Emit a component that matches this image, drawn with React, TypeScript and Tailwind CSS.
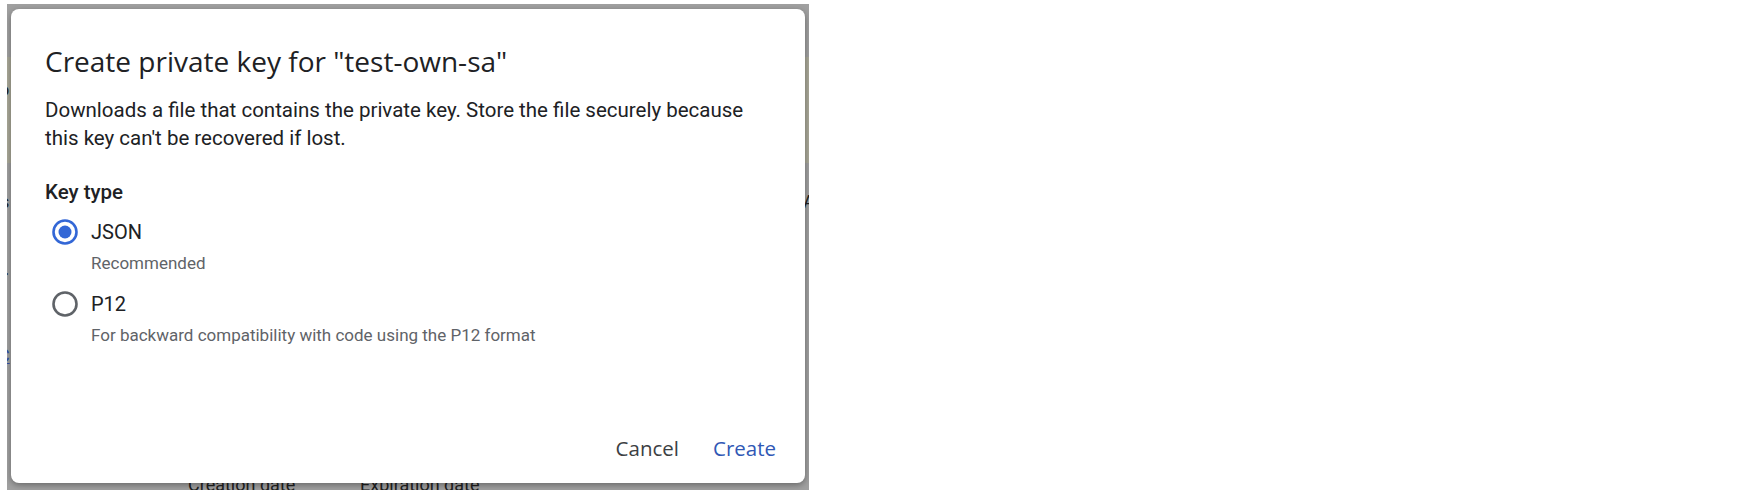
import React from "react";

function Radio({ checked }: { checked: boolean }) {
  return (
    <svg width="26" height="26" viewBox="0 0 26 26" className="shrink-0">
      <circle
        cx="13"
        cy="13"
        r="11.5"
        fill="none"
        stroke={checked ? "#3367d6" : "#5f6368"}
        strokeWidth="2.6"
      />
      {checked && <circle cx="13" cy="13" r="6.5" fill="#3367d6" />}
    </svg>
  );
}

function KeyOption({
  label,
  hint,
  checked,
  className,
}: {
  label: string;
  hint: string;
  checked: boolean;
  className?: string;
}) {
  return (
    <div className={className}>
      <div className="flex items-center gap-[13px] pl-[7px]">
        <Radio checked={checked} />
        <span className="text-[20px] leading-[28px] text-[#202124]">{label}</span>
      </div>
      <div className="mt-[7px] pl-[46px] text-[17px] leading-[20px] text-[#5f6368]">{hint}</div>
    </div>
  );
}

export default function App() {
  return (
    <div className="h-[494px] w-[1758px] bg-white pl-[7px] pt-[4px] font-['Roboto',sans-serif]">
      <div className="relative h-[486px] w-[802px] overflow-hidden bg-[#a0a0a0]">
        {/* page behind the dialog */}
        <div className="absolute inset-0 text-[18px] text-[#202020]">
          <div className="absolute left-0 right-0 top-[53px] h-[106px] bg-[#a9a898]" />
          <span className="absolute left-[-8px] top-[72px]">o</span>
          <span className="absolute left-[-7px] top-[184px]">s</span>
          <span className="absolute left-[-8px] top-[256px]">&gt;</span>
          <span className="absolute left-[-9px] top-[338px] text-[#2f4fa8] underline">C</span>
          <span className="absolute left-[796px] top-[184px]">A</span>
          <span className="absolute left-[181px] top-[467px]">Creation date</span>
          <span className="absolute left-[353px] top-[467px]">Expiration date</span>
        </div>

        <div className="relative ml-[4px] mt-[5px] flex h-[474px] w-[794px] flex-col rounded-[8px] bg-white pl-[34px] pr-[29px] pt-[36px] shadow-[0_2px_6px_rgba(0,0,0,0.35)]">
          <h1 className="font-['Open_Sans',sans-serif] text-[28px] leading-[32px] text-[#202124]">
            Create private key for "test-own-sa"
          </h1>
          <p className="mt-[19px] text-[20.5px] leading-[28px] text-[#202124]">
            Downloads a file that contains the private key. Store the file securely because
            <br />
            this key can't be recovered if lost.
          </p>
          <div className="mt-[26px] text-[20.5px] font-medium leading-[28px] text-[#202124]">
            Key type
          </div>
          <KeyOption className="mt-[12px]" label="JSON" hint="Recommended" checked />
          <KeyOption
            className="mt-[17px]"
            label="P12"
            hint="For backward compatibility with code using the P12 format"
            checked={false}
          />
          <div className="mt-auto flex justify-end gap-[34px] pb-[21px] font-['Open_Sans',sans-serif] text-[20.5px] font-medium leading-[28px]">
            <button className="text-[#3c4043]">Cancel</button>
            <button className="text-[#3158b5]">Create</button>
          </div>
        </div>
      </div>
    </div>
  );
}
